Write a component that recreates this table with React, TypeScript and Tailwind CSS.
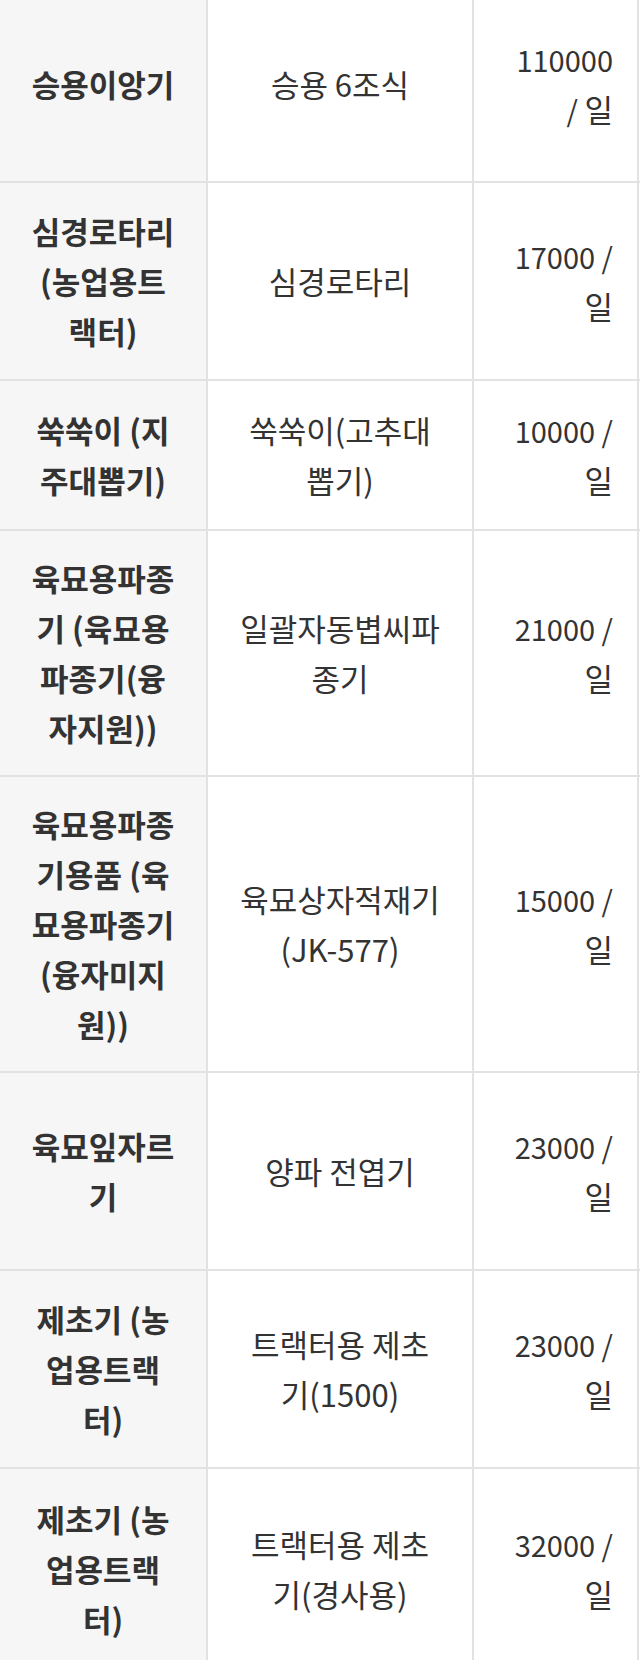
const ROWS = [
  { name: '승용이앙기', model: '승용 6조식', price: '110000', wrapNum: true, h: 'h-[195px]' },
  { name: '심경로타리\n(농업용트\n랙터)', model: '심경로타리', price: '17000', h: 'h-[196px]' },
  { name: '쑥쑥이 (지\n주대뽑기)', model: '쑥쑥이(고추대\n뽑기)', price: '10000', h: 'h-[148px]' },
  { name: '육묘용파종\n기 (육묘용\n파종기(융\n자지원))', model: '일괄자동볍씨파\n종기', price: '21000', h: 'h-[244px]' },
  { name: '육묘용파종\n기용품 (육\n묘용파종기\n(융자미지\n원))', model: '육묘상자적재기\n(JK-577)', price: '15000', h: 'h-[294px]' },
  { name: '육묘잎자르\n기', model: '양파 전엽기', price: '23000', h: 'h-[196px]' },
  { name: '제초기 (농\n업용트랙\n터)', model: '트랙터용 제초\n기(1500)', price: '23000', h: 'h-[196px]' },
  { name: '제초기 (농\n업용트랙\n터)', model: '트랙터용 제초\n기(경사용)', price: '32000', h: 'h-[200px]' },
];

export default function App() {
  return (
    <div
      className="w-[640px] h-[1660px] overflow-hidden bg-white text-[#333] text-[31px] leading-[50px]"
      style={{ fontFamily: '"Noto Sans CJK KR", "Noto Sans", sans-serif' }}
    >
      <div className="-mt-[14px] grid grid-cols-[206px_264px_163px_1fr] gap-[2px] bg-[#e2e2e2]">
        {ROWS.map((row, i) => (
          <div key={i} className="contents">
            <div className={`${row.h} flex items-center justify-center bg-[#f6f6f6] px-3 text-center font-bold whitespace-pre-line`}>
              {row.name}
            </div>
            <div className={`${row.h} flex items-center justify-center bg-white px-3 text-center whitespace-pre-line`}>
              {row.model}
            </div>
            <div className={`${row.h} flex items-center justify-end bg-white pr-[24px] pl-3 text-right text-[29px] whitespace-pre-line`}>
              <div>
                {row.price}
                {row.wrapNum ? '\n/ ' : ' /\n'}
                <span className="text-[31px]">일</span>
              </div>
            </div>
            <div className={`${row.h} bg-white`} />
          </div>
        ))}
      </div>
    </div>
  );
}
